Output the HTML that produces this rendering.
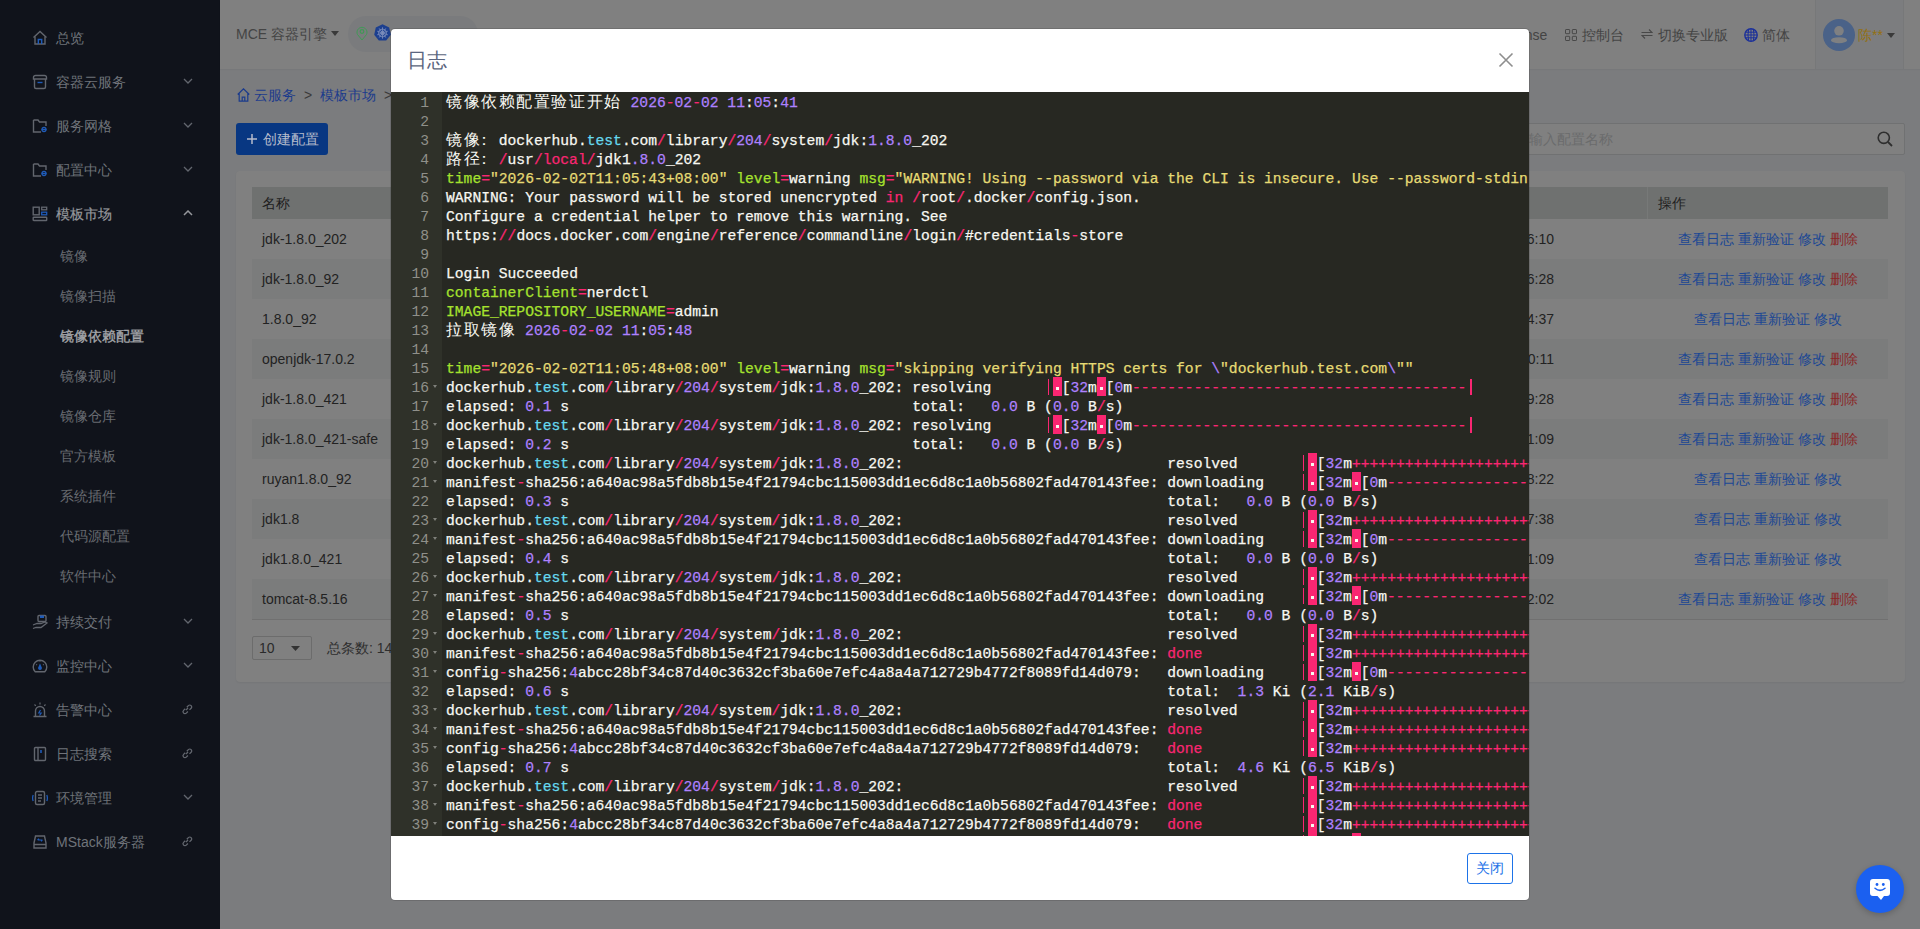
<!DOCTYPE html>
<html><head><meta charset="utf-8">
<style>
*{box-sizing:border-box;margin:0;padding:0}
html,body{width:1920px;height:929px;overflow:hidden}
body{position:relative;background:#7b7c7e;font-family:"Liberation Sans",sans-serif;font-size:14px;color:#222}
.abs{position:absolute}
/* sidebar */
#side{position:absolute;left:0;top:0;width:220px;height:929px;background:#10131b}
.sic{position:absolute;left:32px}
.st{position:absolute;left:56px;height:20px;line-height:22px;font-size:14px;color:#6f737a;white-space:nowrap}
.st.sub{left:60px;color:#686b71}.st.open{color:#95979c;-webkit-text-stroke:0.2px}
.st.act{color:#a4a6aa;-webkit-text-stroke:0.35px}
.chev{position:absolute;left:183px}
/* header */
#hdr{position:absolute;left:220px;top:0;width:1700px;height:69px;background:#808080;box-shadow:0 1px 1px rgba(0,0,0,0.03)}
.ht{position:absolute;top:25px;height:20px;line-height:20px;font-size:14px;color:#444;white-space:nowrap}
#pill{position:absolute;left:128px;top:16px;width:130px;height:36px;border-radius:18px;background:#7a7b7d}
#user{position:absolute;left:1595px;top:0;width:89px;height:69px;background:#7c7d7f;border-left:1px solid #777879;border-right:1px solid #777879}
/* main */
.bc{position:absolute;top:85px;height:20px;line-height:20px;font-size:14px;color:#1b3b8c;white-space:nowrap}
#btn{position:absolute;left:236px;top:123px;width:92px;height:32px;border-radius:3px;background:#083782;color:#b6bccc;font-size:14px;line-height:32px;padding-left:27px}
#search{position:absolute;left:1490px;top:123px;width:415px;height:32px;border:1px solid #707172;border-radius:2px;background:#808080}
#card{position:absolute;left:236px;top:171px;width:1669px;height:511px;border-radius:4px;background:#808080;box-shadow:0 1px 2px rgba(0,0,0,0.05)}
#thead{position:absolute;left:252px;top:187px;width:1636px;height:32px;background:#6f7170}
#thead span{position:absolute;top:6px;line-height:20px;color:#1e1e1e}
.tr{position:absolute;left:252px;width:1636px;height:40px}
.tr.odd{background:#7b7c7c}
.tr span{position:absolute;top:10px;line-height:20px;white-space:nowrap}
.c1{left:10px;color:#222}
.tm{right:334px;color:#222}
.ops{left:1396px;width:240px;text-align:center;color:#1b4794}
.ops em{font-style:normal;color:#8a2828}
#rowline{position:absolute;left:252px;top:619px;width:1636px;height:1px;background:#707070}
#sel{position:absolute;left:252px;top:636px;width:60px;height:24px;border:1px solid #6c6c6c;border-radius:2px}
/* mask pieces not needed, colors baked */
/* modal */
#modal{position:absolute;left:391px;top:29px;width:1138px;height:871px;background:#fff;border-radius:4px;overflow:hidden;box-shadow:0 0 0 1px rgba(0,0,0,0.12)}
#mtitle{position:absolute;left:15.5px;top:18px;font-size:19.5px;line-height:26px;color:#5b6680;letter-spacing:0.5px}
#mclose{position:absolute;left:1107px;top:23px}
#editor{position:absolute;left:0;top:63px;width:1138px;height:744px;background:#272822;overflow:hidden}
#gutter{position:absolute;left:0;top:0;width:51px;height:744px;background:#2f3129;color:#8f908a}
.gn{position:relative;height:19px;line-height:19px;padding-top:2px;text-align:right;padding-right:13px;font-family:"Liberation Mono",monospace;font-size:14.66px}
.fw{position:absolute;left:42px;top:8px;width:0;height:0;border-left:2.5px solid transparent;border-right:2.5px solid transparent;border-top:3px solid #7f807a}
#code{position:absolute;left:55px;top:0;white-space:pre;font-family:"Liberation Mono",monospace;font-size:14.66px;color:#F8F8F2;-webkit-text-stroke:0.25px}
.ln{height:19px;line-height:19px;white-space:pre;padding-top:2px}
.ln b{font-weight:normal}
.ln .k{color:#F92672}.ln .n{color:#AE81FF}.ln .s{color:#E6DB74}.ln .g{color:#A6E22E}.ln .c{color:#66D9EF}
.iv{font-style:normal;display:inline-block;position:relative;top:-2px;width:8.795px;height:19px;background:#F92672;color:transparent;vertical-align:top}.iv::after{content:'';position:absolute;left:3px;top:10px;width:3px;height:2.5px;background:#F8F8F0}
.pp{font-style:normal;display:inline-block;position:relative;top:-2px;width:8.795px;height:19px;color:transparent;vertical-align:top}.pp::after{content:'';position:absolute;left:3.9px;top:2px;width:1.4px;height:16px;background:#F92672}
.cj{font-style:normal;display:inline-block;width:17.59px;vertical-align:top;font-size:16px;-webkit-text-stroke:0;font-weight:300}.cj.co{text-indent:-5px}
#mfoot{position:absolute;left:0;top:807px;width:1138px;height:64px}
#okbtn{position:absolute;left:1076px;top:17px;width:46px;height:31px;border:1px solid #1d73e8;border-radius:3px;color:#1d73e8;font-size:14px;line-height:29px;text-align:center}
#chat{position:absolute;left:1856px;top:865px;width:48px;height:48px;border-radius:50%;background:#1b60f0;box-shadow:0 2px 6px rgba(0,0,0,0.2)}
</style></head><body>
<div id="side">
<svg class="sic" style="top:30px" width="16" height="16" viewBox="0 0 16 16"><path d="M1.5 7.5 L8 1.5 L14.5 7.5" fill="none" stroke="#62666e" stroke-width="1.4"/><path d="M3 6.5 V14 H13 V6.5" fill="none" stroke="#62666e" stroke-width="1.4"/><path d="M6.3 14 V9.5 H9.7 V14" fill="none" stroke="#1f5bb8" stroke-width="1.4"/></svg>
<div class="st" style="top:27px">总览</div>

<svg class="sic" style="top:74px" width="16" height="16" viewBox="0 0 16 16"><path d="M2.5 5 V13 A1.5 1.5 0 0 0 4 14.5 H12 A1.5 1.5 0 0 0 13.5 13 V5 M1.5 5 H14.5 V3.5 A2 2 0 0 0 12.5 1.5 H3.5 A2 2 0 0 0 1.5 3.5 Z" fill="none" stroke="#62666e" stroke-width="1.4"/><path d="M5.5 8.5 H10.5" stroke="#1f5bb8" stroke-width="1.4"/></svg>
<div class="st" style="top:71px">容器云服务</div>
<svg class="chev" style="top:78px" width="10" height="6" viewBox="0 0 10 6"><path d="M1 1 L5 5 L9 1" fill="none" stroke="#62666e" stroke-width="1.3"/></svg>
<svg class="sic" style="top:118px" width="16" height="16" viewBox="0 0 16 16"><path d="M1.5 2 H6 L7.5 4 H14 V8 M9 14 H1.5 V2" fill="none" stroke="#62666e" stroke-width="1.4"/><circle cx="12" cy="11.5" r="2" fill="none" stroke="#1f5bb8" stroke-width="1.3"/><path d="M9.5 11.5 H14.5" stroke="#1f5bb8" stroke-width="1"/></svg>
<div class="st" style="top:115px">服务网格</div>
<svg class="chev" style="top:122px" width="10" height="6" viewBox="0 0 10 6"><path d="M1 1 L5 5 L9 1" fill="none" stroke="#62666e" stroke-width="1.3"/></svg>
<svg class="sic" style="top:162px" width="16" height="16" viewBox="0 0 16 16"><path d="M1.5 2 H6 L7.5 4 H14 V8 M9 14 H1.5 V2" fill="none" stroke="#62666e" stroke-width="1.4"/><circle cx="12" cy="11.5" r="2" fill="none" stroke="#1f5bb8" stroke-width="1.3"/><path d="M9.5 11.5 H14.5" stroke="#1f5bb8" stroke-width="1"/></svg>
<div class="st" style="top:159px">配置中心</div>
<svg class="chev" style="top:166px" width="10" height="6" viewBox="0 0 10 6"><path d="M1 1 L5 5 L9 1" fill="none" stroke="#62666e" stroke-width="1.3"/></svg>
<svg class="sic" style="top:206px" width="16" height="16" viewBox="0 0 16 16"><rect x="1.2" y="1.2" width="6" height="7.6" fill="none" stroke="#62666e" stroke-width="1.4"/><rect x="9.7" y="1.2" width="5" height="2.6" fill="none" stroke="#62666e" stroke-width="1.3"/><rect x="9.7" y="6.2" width="5" height="2.6" fill="none" stroke="#1f5bb8" stroke-width="1.3"/><rect x="1.2" y="11.2" width="13.5" height="3.3" rx="0.6" fill="none" stroke="#62666e" stroke-width="1.4"/></svg>
<div class="st open" style="top:203px">模板市场</div>
<svg class="chev" style="top:210px" width="10" height="6" viewBox="0 0 10 6"><path d="M1 5 L5 1 L9 5" fill="none" stroke="#95979c" stroke-width="1.5"/></svg>
<svg class="sic" style="top:614px" width="16" height="16" viewBox="0 0 16 16"><path d="M1 11 L5 9.5 H9 L13 8 L15 9 L9 13.5 H4 L1 14.5" fill="none" stroke="#62666e" stroke-width="1.3"/><rect x="6" y="1.5" width="8" height="6" rx="1" fill="none" stroke="#62666e" stroke-width="1.4"/><rect x="8" y="1.5" width="4" height="2.5" fill="#1f5bb8"/></svg>
<div class="st" style="top:611px">持续交付</div>
<svg class="chev" style="top:618px" width="10" height="6" viewBox="0 0 10 6"><path d="M1 1 L5 5 L9 1" fill="none" stroke="#62666e" stroke-width="1.3"/></svg>
<svg class="sic" style="top:658px" width="16" height="16" viewBox="0 0 16 16"><path d="M3.2 13.8 A6.8 6.8 0 1 1 12.8 13.8 Z" fill="none" stroke="#62666e" stroke-width="1.4" stroke-linejoin="round"/><path d="M8 5.5 L9.8 9.5 A1.9 1.9 0 1 1 6.2 9.5 Z" fill="#1f5bb8"/><path d="M4.3 6.3 L5 7 M11.7 6.3 L11 7 M8 3.2 V4" stroke="#62666e" stroke-width="1.1"/></svg>
<div class="st" style="top:655px">监控中心</div>
<svg class="chev" style="top:662px" width="10" height="6" viewBox="0 0 10 6"><path d="M1 1 L5 5 L9 1" fill="none" stroke="#62666e" stroke-width="1.3"/></svg>
<svg class="sic" style="top:702px" width="16" height="16" viewBox="0 0 16 16"><path d="M3.5 14 V9 A4.5 4.5 0 0 1 12.5 9 V14 M1.5 14.5 H14.5" fill="none" stroke="#62666e" stroke-width="1.4"/><path d="M8.5 8 L6.8 11 H9.2 L7.5 13.5" fill="none" stroke="#1f5bb8" stroke-width="1.2"/><path d="M8 0.5 V2.5 M2.5 2.5 L3.8 3.8 M13.5 2.5 L12.2 3.8" stroke="#62666e" stroke-width="1.2"/></svg>
<div class="st" style="top:699px">告警中心</div>
<svg class="chev" style="top:703px;left:181px" width="12" height="12" viewBox="0 0 12 12"><path d="M5 7 L7 5 M4.2 5.8 L2.6 7.4 A1.9 1.9 0 0 0 5.3 10.1 L6.9 8.5 M5.8 4.2 L7.4 2.6 A1.9 1.9 0 0 1 10.1 5.3 L8.5 6.9" fill="none" stroke="#62666e" stroke-width="1.3"/></svg>
<svg class="sic" style="top:746px" width="16" height="16" viewBox="0 0 16 16"><rect x="2.5" y="1.5" width="11" height="13" rx="1" fill="none" stroke="#62666e" stroke-width="1.4"/><path d="M6 1.5 V14.5" stroke="#62666e" stroke-width="1.4"/><path d="M9 4 V7" stroke="#1f5bb8" stroke-width="1.6"/></svg>
<div class="st" style="top:743px">日志搜索</div>
<svg class="chev" style="top:747px;left:181px" width="12" height="12" viewBox="0 0 12 12"><path d="M5 7 L7 5 M4.2 5.8 L2.6 7.4 A1.9 1.9 0 0 0 5.3 10.1 L6.9 8.5 M5.8 4.2 L7.4 2.6 A1.9 1.9 0 0 1 10.1 5.3 L8.5 6.9" fill="none" stroke="#62666e" stroke-width="1.3"/></svg>
<svg class="sic" style="top:790px" width="16" height="16" viewBox="0 0 16 16"><rect x="3.5" y="1.5" width="9" height="13" rx="1.5" fill="none" stroke="#62666e" stroke-width="1.4"/><path d="M6 5 H10 M6 8 H10 M6 11 H9" stroke="#62666e" stroke-width="1.3"/><path d="M1.2 5 Q0 8 1.2 11 M14.8 5 Q16 8 14.8 11" fill="none" stroke="#1f5bb8" stroke-width="1.3"/></svg>
<div class="st" style="top:787px">环境管理</div>
<svg class="chev" style="top:794px" width="10" height="6" viewBox="0 0 10 6"><path d="M1 1 L5 5 L9 1" fill="none" stroke="#62666e" stroke-width="1.3"/></svg>
<svg class="sic" style="top:834px" width="16" height="16" viewBox="0 0 16 16"><path d="M2 9 L3.5 2 H12.5 L14 9 V14 H2 Z M2 10.5 H14" fill="none" stroke="#62666e" stroke-width="1.4"/><path d="M5.5 6 H10.5 M5.5 6 L7 4.8 M10.5 6 L9 7.2" fill="none" stroke="#1f5bb8" stroke-width="1.2"/></svg>
<div class="st" style="top:831px">MStack服务器</div>
<svg class="chev" style="top:835px;left:181px" width="12" height="12" viewBox="0 0 12 12"><path d="M5 7 L7 5 M4.2 5.8 L2.6 7.4 A1.9 1.9 0 0 0 5.3 10.1 L6.9 8.5 M5.8 4.2 L7.4 2.6 A1.9 1.9 0 0 1 10.1 5.3 L8.5 6.9" fill="none" stroke="#62666e" stroke-width="1.3"/></svg>
<div class="st sub" style="top:245px">镜像</div>
<div class="st sub" style="top:285px">镜像扫描</div>
<div class="st sub act" style="top:325px">镜像依赖配置</div>
<div class="st sub" style="top:365px">镜像规则</div>
<div class="st sub" style="top:405px">镜像仓库</div>
<div class="st sub" style="top:445px">官方模板</div>
<div class="st sub" style="top:485px">系统插件</div>
<div class="st sub" style="top:525px">代码源配置</div>
<div class="st sub" style="top:565px">软件中心</div>
</div>
<div id="hdr">
  <div class="ht" style="left:16px;top:24px">MCE 容器引擎</div>
  <svg class="abs" style="left:111px;top:31px" width="8" height="5" viewBox="0 0 8 5"><path d="M0 0 H8 L4 5Z" fill="#3a3a3a"/></svg>
  <div id="pill"></div>
  <svg class="abs" style="left:136px;top:26px" width="12" height="15" viewBox="0 0 12 15"><path d="M6 14 L1.5 8.5 A5 5 0 1 1 10.5 8.5 Z" fill="none" stroke="#3f9a55" stroke-width="1"/><circle cx="6" cy="5.5" r="1.8" fill="none" stroke="#3f9a55" stroke-width="1.2"/></svg>
  <svg class="abs" style="left:154px;top:24px" width="17" height="17" viewBox="0 0 17 17"><path d="M8.5 0.3 L15.2 3.5 L16.8 10.8 L12.2 16.6 H4.8 L0.2 10.8 L1.8 3.5Z" fill="#1c3f8f"/><g stroke="#7d8fbd" stroke-width="0.8" fill="none"><circle cx="8.5" cy="9" r="4"/><circle cx="8.5" cy="9" r="1.6" fill="#1c3f8f"/><path d="M8.5 3.3 V14.7 M3.2 7.2 L13.8 10.8 M13.8 7.2 L3.2 10.8 M5.2 13.6 L11.8 4.4 M11.8 13.6 L5.2 4.4"/></g></svg>
  <div class="ht" style="left:1279px">License</div>
  <svg class="abs" style="left:1345px;top:29px" width="12" height="12" viewBox="0 0 12 12"><g fill="none" stroke="#484848" stroke-width="1"><rect x="0.5" y="0.5" width="4.2" height="4.2" rx="0.6"/><rect x="7.3" y="0.5" width="4.2" height="4.2" rx="0.6"/><rect x="0.5" y="7.3" width="4.2" height="4.2" rx="0.6"/><rect x="7.3" y="7.3" width="4.2" height="4.2" rx="0.6"/></g></svg>
  <div class="ht" style="left:1362px">控制台</div>
  <svg class="abs" style="left:1421px;top:28px" width="12" height="12" viewBox="0 0 12 12"><path d="M0.5 4.5 H11 L8 1.5 M11.5 7.5 H1 L4 10.5" fill="none" stroke="#484848" stroke-width="1.1"/></svg>
  <div class="ht" style="left:1438px">切换专业版</div>
  <svg class="abs" style="left:1524px;top:28px" width="14" height="14" viewBox="0 0 14 14"><circle cx="7" cy="7" r="6.2" fill="none" stroke="#1a2f9a" stroke-width="1.4"/><path d="M1 7 H13 M7 1 V13 M2 4.2 H12 M2 9.8 H12 M4.6 1.6 Q3.3 7 4.6 12.4 M9.4 1.6 Q10.7 7 9.4 12.4" fill="none" stroke="#1a2f9a" stroke-width="1"/></svg>
  <div class="ht" style="left:1542px">简体</div>
  <div id="user"></div>
  <svg class="abs" style="left:1603px;top:19px" width="32" height="32" viewBox="0 0 32 32"><circle cx="16" cy="16" r="16" fill="#4a6288"/><circle cx="16" cy="11.8" r="4.8" fill="#7f8082"/><ellipse cx="16" cy="21.2" rx="8" ry="3" fill="#7f8082"/></svg>
  <div class="ht" style="left:1638px;color:#94700f">陈**</div>
  <svg class="abs" style="left:1667px;top:33px" width="8" height="5" viewBox="0 0 8 5"><path d="M0 0 H8 L4 5Z" fill="#3a3a3a"/></svg>
</div>
<svg class="abs" style="left:237px;top:88px" width="13" height="14" viewBox="0 0 13 14"><path d="M0.7 6.5 L6.5 0.8 L12.3 6.5 M2.2 5.2 V13.2 H10.8 V5.2 M5.2 13.2 V9.2 H7.8 V13.2" fill="none" stroke="#1b3b8c" stroke-width="1.2"/></svg>
<div class="bc" style="left:254px">云服务</div>
<div class="bc" style="left:304px;color:#3a3a3a">&gt;</div>
<div class="bc" style="left:320px">模板市场</div>
<div class="bc" style="left:384px;color:#3a3a3a">&gt;</div>
<div id="btn">创建配置</div>
<svg class="abs" style="left:247px;top:134px" width="10" height="10" viewBox="0 0 10 10"><path d="M5 0 V10 M0 5 H10" stroke="#b6bccc" stroke-width="1.5"/></svg>
<div id="search"></div>
<div class="abs" style="left:1529px;top:129px;line-height:20px;color:#6a6b6c;font-size:14px">输入配置名称</div>
<svg class="abs" style="left:1877px;top:131px" width="16" height="16" viewBox="0 0 16 16"><circle cx="6.8" cy="6.8" r="5.6" fill="none" stroke="#2e2e2e" stroke-width="1.6"/><path d="M11 11 L15 15" stroke="#2e2e2e" stroke-width="1.8"/></svg>
<div id="card"></div>
<div id="thead"><span style="left:10px">名称</span><span style="left:1406px">操作</span><i class="abs" style="left:1395px;top:0;width:1px;height:32px;background:#777978"></i></div>
<div class="tr" style="top:219px"><span class="c1">jdk-1.8.0_202</span><span class="tm">2026-02-02 11:06:10</span><span class="ops">查看日志 重新验证 修改 <em>删除</em></span></div>
<div class="tr odd" style="top:259px"><span class="c1">jdk-1.8.0_92</span><span class="tm">2026-02-02 11:06:28</span><span class="ops">查看日志 重新验证 修改 <em>删除</em></span></div>
<div class="tr" style="top:299px"><span class="c1">1.8.0_92</span><span class="tm">2026-02-02 11:04:37</span><span class="ops">查看日志 重新验证 修改</span></div>
<div class="tr odd" style="top:339px"><span class="c1">openjdk-17.0.2</span><span class="tm">2026-02-02 11:00:11</span><span class="ops">查看日志 重新验证 修改 <em>删除</em></span></div>
<div class="tr" style="top:379px"><span class="c1">jdk-1.8.0_421</span><span class="tm">2026-02-02 10:59:28</span><span class="ops">查看日志 重新验证 修改 <em>删除</em></span></div>
<div class="tr odd" style="top:419px"><span class="c1">jdk-1.8.0_421-safe</span><span class="tm">2026-02-02 10:51:09</span><span class="ops">查看日志 重新验证 修改 <em>删除</em></span></div>
<div class="tr" style="top:459px"><span class="c1">ruyan1.8.0_92</span><span class="tm">2026-02-02 10:48:22</span><span class="ops">查看日志 重新验证 修改</span></div>
<div class="tr odd" style="top:499px"><span class="c1">jdk1.8</span><span class="tm">2026-02-02 10:47:38</span><span class="ops">查看日志 重新验证 修改</span></div>
<div class="tr" style="top:539px"><span class="c1">jdk1.8.0_421</span><span class="tm">2026-02-02 10:51:09</span><span class="ops">查看日志 重新验证 修改</span></div>
<div class="tr odd" style="top:579px"><span class="c1">tomcat-8.5.16</span><span class="tm">2026-02-02 10:42:02</span><span class="ops">查看日志 重新验证 修改 <em>删除</em></span></div>
<div id="rowline"></div>
<div id="sel"></div>
<div class="abs" style="left:259px;top:638px;line-height:20px;color:#2a2a2a">10</div>
<svg class="abs" style="left:291px;top:646px" width="9" height="5" viewBox="0 0 9 5"><path d="M0 0 H9 L4.5 5Z" fill="#333"/></svg>
<div class="abs" style="left:327px;top:638px;line-height:20px;color:#2e2e2e">总条数: 14</div>
<div id="modal">
  <div id="mtitle">日志</div>
  <svg id="mclose" width="16" height="16" viewBox="0 0 16 16"><path d="M1.5 1.5 L14.5 14.5 M14.5 1.5 L1.5 14.5" stroke="#8e8e8e" stroke-width="1.6"/></svg>
  <div id="editor">
    <div id="gutter"><div class="gn">1</div><div class="gn">2</div><div class="gn">3</div><div class="gn">4</div><div class="gn">5</div><div class="gn">6</div><div class="gn">7</div><div class="gn">8</div><div class="gn">9</div><div class="gn">10</div><div class="gn">11</div><div class="gn">12</div><div class="gn">13</div><div class="gn">14</div><div class="gn">15</div><div class="gn">16<span class="fw"></span></div><div class="gn">17</div><div class="gn">18<span class="fw"></span></div><div class="gn">19</div><div class="gn">20<span class="fw"></span></div><div class="gn">21<span class="fw"></span></div><div class="gn">22</div><div class="gn">23<span class="fw"></span></div><div class="gn">24<span class="fw"></span></div><div class="gn">25</div><div class="gn">26<span class="fw"></span></div><div class="gn">27<span class="fw"></span></div><div class="gn">28</div><div class="gn">29<span class="fw"></span></div><div class="gn">30<span class="fw"></span></div><div class="gn">31<span class="fw"></span></div><div class="gn">32</div><div class="gn">33<span class="fw"></span></div><div class="gn">34<span class="fw"></span></div><div class="gn">35<span class="fw"></span></div><div class="gn">36</div><div class="gn">37<span class="fw"></span></div><div class="gn">38<span class="fw"></span></div><div class="gn">39<span class="fw"></span></div><div class="gn">40<span class="fw"></span></div></div>
    <div id="code"><div class="ln"><i class="cj">镜</i><i class="cj">像</i><i class="cj">依</i><i class="cj">赖</i><i class="cj">配</i><i class="cj">置</i><i class="cj">验</i><i class="cj">证</i><i class="cj">开</i><i class="cj">始</i> <b class="n">2026</b><b class="k">-</b><b class="n">02</b><b class="k">-</b><b class="n">02</b> <b class="n">11</b>:<b class="n">05</b>:<b class="n">41</b></div><div class="ln"></div><div class="ln"><i class="cj">镜</i><i class="cj">像</i><i class="cj co">：</i>dockerhub.<b class="c">test</b>.com<b class="k">/</b>library<b class="k">/</b><b class="n">204</b><b class="k">/</b>system<b class="k">/</b>jdk:<b class="n">1.8.0</b>_202</div><div class="ln"><i class="cj">路</i><i class="cj">径</i><i class="cj co">：</i><b class="k">/</b>usr<b class="k">/local/</b>jdk1<b class="n">.8.0</b>_202</div><div class="ln"><b class="g">time</b><b class="k">=</b><b class="s">&quot;2026-02-02T11:05:43+08:00&quot;</b> <b class="g">level</b><b class="k">=</b>warning <b class="g">msg</b><b class="k">=</b><b class="s">&quot;WARNING! Using --password via the CLI is insecure. Use --password-stdin&quot;</b></div><div class="ln">WARNING: Your password will be stored unencrypted <b class="k">in</b> <b class="k">/</b>root<b class="k">/</b>.docker<b class="k">/</b>config.json.</div><div class="ln">Configure a credential helper to remove this warning. See</div><div class="ln">https:<b class="k">//</b>docs.docker.com<b class="k">/</b>engine<b class="k">/</b>reference<b class="k">/</b>commandline<b class="k">/</b>login<b class="k">/</b>#credentials<b class="k">-</b>store</div><div class="ln"></div><div class="ln">Login Succeeded</div><div class="ln"><b class="g">containerClient</b><b class="k">=</b>nerdctl</div><div class="ln"><b class="g">IMAGE_REPOSITORY_USERNAME</b><b class="k">=</b>admin</div><div class="ln"><i class="cj">拉</i><i class="cj">取</i><i class="cj">镜</i><i class="cj">像</i> <b class="n">2026</b><b class="k">-</b><b class="n">02</b><b class="k">-</b><b class="n">02</b> <b class="n">11</b>:<b class="n">05</b>:<b class="n">48</b></div><div class="ln"></div><div class="ln"><b class="g">time</b><b class="k">=</b><b class="s">&quot;2026-02-02T11:05:48+08:00&quot;</b> <b class="g">level</b><b class="k">=</b>warning <b class="g">msg</b><b class="k">=</b><b class="s">&quot;skipping verifying HTTPS certs for </b><b class="n">\</b><b class="s">&quot;dockerhub.test.com</b><b class="n">\</b><b class="s">&quot;&quot;</b></div><div class="ln">dockerhub.<b class="c">test</b>.com<b class="k">/</b>library<b class="k">/</b><b class="n">204</b><b class="k">/</b>system<b class="k">/</b>jdk:<b class="n">1.8.0</b>_202: resolving      <i class="pp">|</i><i class="iv">·</i>[<b class="n">32</b>m<i class="iv">·</i>[<b class="n">0</b>m<b class="k">--------------------------------------</b><i class="pp">|</i></div><div class="ln">elapsed: <b class="n">0.1</b> s                                       total:   <b class="n">0.0</b> B (<b class="n">0.0</b> B<b class="k">/</b>s)</div><div class="ln">dockerhub.<b class="c">test</b>.com<b class="k">/</b>library<b class="k">/</b><b class="n">204</b><b class="k">/</b>system<b class="k">/</b>jdk:<b class="n">1.8.0</b>_202: resolving      <i class="pp">|</i><i class="iv">·</i>[<b class="n">32</b>m<i class="iv">·</i>[<b class="n">0</b>m<b class="k">--------------------------------------</b><i class="pp">|</i></div><div class="ln">elapsed: <b class="n">0.2</b> s                                       total:   <b class="n">0.0</b> B (<b class="n">0.0</b> B<b class="k">/</b>s)</div><div class="ln">dockerhub.<b class="c">test</b>.com<b class="k">/</b>library<b class="k">/</b><b class="n">204</b><b class="k">/</b>system<b class="k">/</b>jdk:<b class="n">1.8.0</b>_202:                              resolved       <i class="pp">|</i><i class="iv">·</i>[<b class="n">32</b>m<b class="k">++++++++++++++++++++++++++++++++++++++++</b></div><div class="ln">manifest<b class="k">-</b>sha256:a640ac98a5fdb8b15e4f21794cbc115003dd1ec6d8c1a0b56802fad470143fee: downloading    <i class="pp">|</i><i class="iv">·</i>[<b class="n">32</b>m<i class="iv">·</i>[<b class="n">0</b>m<b class="k">----------------------------------------</b></div><div class="ln">elapsed: <b class="n">0.3</b> s                                                                    total:   <b class="n">0.0</b> B (<b class="n">0.0</b> B<b class="k">/</b>s)</div><div class="ln">dockerhub.<b class="c">test</b>.com<b class="k">/</b>library<b class="k">/</b><b class="n">204</b><b class="k">/</b>system<b class="k">/</b>jdk:<b class="n">1.8.0</b>_202:                              resolved       <i class="pp">|</i><i class="iv">·</i>[<b class="n">32</b>m<b class="k">++++++++++++++++++++++++++++++++++++++++</b></div><div class="ln">manifest<b class="k">-</b>sha256:a640ac98a5fdb8b15e4f21794cbc115003dd1ec6d8c1a0b56802fad470143fee: downloading    <i class="pp">|</i><i class="iv">·</i>[<b class="n">32</b>m<i class="iv">·</i>[<b class="n">0</b>m<b class="k">----------------------------------------</b></div><div class="ln">elapsed: <b class="n">0.4</b> s                                                                    total:   <b class="n">0.0</b> B (<b class="n">0.0</b> B<b class="k">/</b>s)</div><div class="ln">dockerhub.<b class="c">test</b>.com<b class="k">/</b>library<b class="k">/</b><b class="n">204</b><b class="k">/</b>system<b class="k">/</b>jdk:<b class="n">1.8.0</b>_202:                              resolved       <i class="pp">|</i><i class="iv">·</i>[<b class="n">32</b>m<b class="k">++++++++++++++++++++++++++++++++++++++++</b></div><div class="ln">manifest<b class="k">-</b>sha256:a640ac98a5fdb8b15e4f21794cbc115003dd1ec6d8c1a0b56802fad470143fee: downloading    <i class="pp">|</i><i class="iv">·</i>[<b class="n">32</b>m<i class="iv">·</i>[<b class="n">0</b>m<b class="k">----------------------------------------</b></div><div class="ln">elapsed: <b class="n">0.5</b> s                                                                    total:   <b class="n">0.0</b> B (<b class="n">0.0</b> B<b class="k">/</b>s)</div><div class="ln">dockerhub.<b class="c">test</b>.com<b class="k">/</b>library<b class="k">/</b><b class="n">204</b><b class="k">/</b>system<b class="k">/</b>jdk:<b class="n">1.8.0</b>_202:                              resolved       <i class="pp">|</i><i class="iv">·</i>[<b class="n">32</b>m<b class="k">++++++++++++++++++++++++++++++++++++++++</b></div><div class="ln">manifest<b class="k">-</b>sha256:a640ac98a5fdb8b15e4f21794cbc115003dd1ec6d8c1a0b56802fad470143fee: <b class="k">done</b>           <i class="pp">|</i><i class="iv">·</i>[<b class="n">32</b>m<b class="k">++++++++++++++++++++++++++++++++++++++++</b></div><div class="ln">config<b class="k">-</b>sha256:<b class="n">4</b>abcc28bf34c87d40c3632cf3ba60e7efc4a8a4a712729b4772f8089fd14d079:   downloading    <i class="pp">|</i><i class="iv">·</i>[<b class="n">32</b>m<i class="iv">·</i>[<b class="n">0</b>m<b class="k">----------------------------------------</b></div><div class="ln">elapsed: <b class="n">0.6</b> s                                                                    total:  <b class="n">1.3</b> Ki (<b class="n">2.1</b> KiB<b class="k">/</b>s)</div><div class="ln">dockerhub.<b class="c">test</b>.com<b class="k">/</b>library<b class="k">/</b><b class="n">204</b><b class="k">/</b>system<b class="k">/</b>jdk:<b class="n">1.8.0</b>_202:                              resolved       <i class="pp">|</i><i class="iv">·</i>[<b class="n">32</b>m<b class="k">++++++++++++++++++++++++++++++++++++++++</b></div><div class="ln">manifest<b class="k">-</b>sha256:a640ac98a5fdb8b15e4f21794cbc115003dd1ec6d8c1a0b56802fad470143fee: <b class="k">done</b>           <i class="pp">|</i><i class="iv">·</i>[<b class="n">32</b>m<b class="k">++++++++++++++++++++++++++++++++++++++++</b></div><div class="ln">config<b class="k">-</b>sha256:<b class="n">4</b>abcc28bf34c87d40c3632cf3ba60e7efc4a8a4a712729b4772f8089fd14d079:   <b class="k">done</b>           <i class="pp">|</i><i class="iv">·</i>[<b class="n">32</b>m<b class="k">++++++++++++++++++++++++++++++++++++++++</b></div><div class="ln">elapsed: <b class="n">0.7</b> s                                                                    total:  <b class="n">4.6</b> Ki (<b class="n">6.5</b> KiB<b class="k">/</b>s)</div><div class="ln">dockerhub.<b class="c">test</b>.com<b class="k">/</b>library<b class="k">/</b><b class="n">204</b><b class="k">/</b>system<b class="k">/</b>jdk:<b class="n">1.8.0</b>_202:                              resolved       <i class="pp">|</i><i class="iv">·</i>[<b class="n">32</b>m<b class="k">++++++++++++++++++++++++++++++++++++++++</b></div><div class="ln">manifest<b class="k">-</b>sha256:a640ac98a5fdb8b15e4f21794cbc115003dd1ec6d8c1a0b56802fad470143fee: <b class="k">done</b>           <i class="pp">|</i><i class="iv">·</i>[<b class="n">32</b>m<b class="k">++++++++++++++++++++++++++++++++++++++++</b></div><div class="ln">config<b class="k">-</b>sha256:<b class="n">4</b>abcc28bf34c87d40c3632cf3ba60e7efc4a8a4a712729b4772f8089fd14d079:   <b class="k">done</b>           <i class="pp">|</i><i class="iv">·</i>[<b class="n">32</b>m<b class="k">++++++++++++++++++++++++++++++++++++++++</b></div><div class="ln">config<b class="k">-</b>sha256:<b class="n">4</b>abcc28bf34c87d40c3632cf3ba60e7efc4a8a4a712729b4772f8089fd14d079:   downloading    <i class="pp">|</i><i class="iv">·</i>[<b class="n">32</b>m<i class="iv">·</i>[<b class="n">0</b>m<b class="k">----------------------------------------</b></div></div>
  </div>
  <div id="mfoot"><div id="okbtn">关闭</div></div>
</div>
<div id="chat"><svg class="abs" style="left:0;top:0" width="48" height="48" viewBox="0 0 48 48"><path d="M17 14 H31 A3 3 0 0 1 34 17 V28 A3 3 0 0 1 31 31 H28 L25 35 L21.5 31 H17 A3 3 0 0 1 14 28 V17 A3 3 0 0 1 17 14 Z" fill="#fff"/><circle cx="21" cy="19.5" r="1.4" fill="#1b60f0"/><circle cx="27.3" cy="19.5" r="1.4" fill="#1b60f0"/><path d="M19 23.2 Q24 27.5 29 23.2" fill="none" stroke="#1b60f0" stroke-width="1.5" stroke-linecap="round"/></svg></div>
</body></html>
